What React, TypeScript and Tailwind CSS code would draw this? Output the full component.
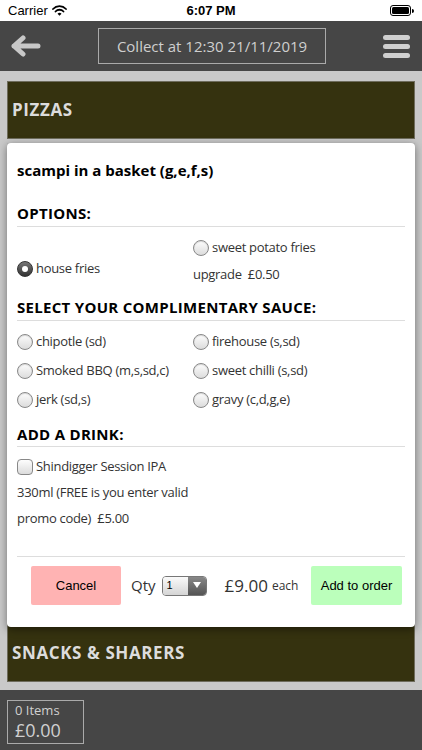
import React from "react";

const F = { fontFamily: '"Open Sans", "DejaVu Sans", sans-serif' };

function Radio({ checked = false }: { checked?: boolean }) {
  if (checked) {
    return (
      <span className="inline-flex h-[16px] w-[16px] shrink-0 items-center justify-center rounded-full border border-[#333] bg-gradient-to-b from-[#777] to-[#333]">
        <span className="h-[6px] w-[6px] rounded-full bg-white" />
      </span>
    );
  }
  return (
    <span className="inline-block h-[16px] w-[16px] shrink-0 rounded-full border border-[#888] bg-gradient-to-b from-[#fdfdfd] to-[#dcdcdc] shadow-[inset_0_1px_1px_rgba(0,0,0,0.15)]" />
  );
}

function Opt({ label, checked }: { label: string; checked?: boolean }) {
  return (
    <div className="flex h-[29px] items-center gap-[3px] text-[13px] tracking-[-0.3px] text-[#333]">
      <Radio checked={checked} />
      <span>{label}</span>
    </div>
  );
}

export default function App() {
  return (
    <div className="relative h-[750px] w-[422px] overflow-hidden bg-[#c9c9c9]" style={F}>
      {/* status bar */}
      <div
        className="flex h-[21px] items-center justify-between bg-white px-[8px] text-[13px] text-black"
        style={{ fontFamily: '"Liberation Sans", Arial, sans-serif' }}
      >
        <div className="flex w-[100px] items-center gap-[4px]">
          <span>Carrier</span>
          <svg width="15" height="11" viewBox="0 0 15 11">
            <path d="M1 4 A9 9 0 0 1 14 4" stroke="#000" strokeWidth="1.8" fill="none" strokeLinecap="round" />
            <path d="M3.5 6.5 A5.5 5.5 0 0 1 11.5 6.5" stroke="#000" strokeWidth="1.8" fill="none" strokeLinecap="round" />
            <path d="M5.5 8.8 L7.5 10.8 L9.5 8.8 A2.8 2.8 0 0 0 5.5 8.8 Z" fill="#000" />
          </svg>
        </div>
        <span className="font-bold">6:07 PM</span>
        <div className="flex w-[100px] justify-end">
          <div className="flex items-center">
            <div className="h-[11px] w-[21px] rounded-[3px] border border-black p-[1px]">
              <div className="h-full w-full rounded-[1.5px] bg-black" />
            </div>
            <div className="ml-[1px] h-[4px] w-[1.5px] rounded-r bg-black" />
          </div>
        </div>
      </div>

      {/* header */}
      <div className="flex h-[50px] items-center justify-between bg-[#464646] pl-[9px] pr-[12px]">
        <svg width="32" height="22" viewBox="0 0 32 22">
          <path d="M5 11 H29 M14 3 L5 11 L14 19" stroke="#c8c8c8" strokeWidth="5" fill="none" strokeLinecap="round" strokeLinejoin="round" />
        </svg>
        <div className="flex h-[36px] w-[228px] items-center justify-center border border-[#aaa] text-[15px] text-[#cfcfcf]">
          Collect at 12:30 21/11/2019
        </div>
        <div className="flex w-[27px] flex-col gap-[4px]">
          <div className="h-[5px] rounded-full bg-[#cfcfcf]" />
          <div className="h-[5px] rounded-full bg-[#cfcfcf]" />
          <div className="h-[5px] rounded-full bg-[#cfcfcf]" />
        </div>
      </div>

      {/* list */}
      <div className="flex flex-col px-[7px] pt-[10px] pb-[8px]">
        <div className="flex h-[58px] items-center border border-[#6e6c5c] bg-[#35320f] pl-[4px] text-[17px] font-bold tracking-[0.6px] text-[#dcdcdc]">
          PIZZAS
        </div>
        <div className="mt-[4px] h-[481px] bg-[#bdbdbd]" />
        <div className="flex h-[58px] items-center border border-[#6e6c5c] bg-[#35320f] pl-[4px] text-[17px] font-bold tracking-[0.6px] text-[#dcdcdc]">
          SNACKS &amp; SHARERS
        </div>
      </div>

      {/* footer */}
      <div className="h-[60px] bg-[#464646] px-[7px] pt-[10px]">
        <div className="flex h-[44px] w-[77px] flex-col justify-center gap-[1px] border border-[#aaa] pl-[7px] text-[#d0d0d0]">
          <div className="h-[15px] text-[13px] leading-[15px]">0 Items</div>
          <div className="h-[22px] text-[18px] leading-[22px]">£0.00</div>
        </div>
      </div>

      {/* modal */}
      <div className="absolute left-[7px] top-[143px] flex h-[484px] w-[408px] flex-col rounded-[4px] bg-white px-[10px] shadow-[0_2px_8px_rgba(0,0,0,0.45)]">
        <div className="mt-[17px] text-[15px] font-bold leading-[20px] text-black">scampi in a basket (g,e,f,s)</div>

        <div className="mt-[23px] text-[15px] font-bold leading-[20px] tracking-[0.3px] text-black">OPTIONS:</div>
        <div className="mt-[3px] border-t border-[#ddd]" />
        <div className="grid grid-cols-[176px_1fr]">
          <div className="pt-[27px]">
            <Opt label="house fries" checked />
          </div>
          <div className="pt-[6px]">
            <Opt label="sweet potato fries" />
            <div className="pt-[2px] text-[13px] leading-[20px] tracking-[-0.3px] text-[#333]">upgrade&nbsp; £0.50</div>
          </div>
        </div>

        <div className="mt-[13px] text-[15px] font-bold leading-[20px] tracking-[0.3px] text-black">SELECT YOUR COMPLIMENTARY SAUCE:</div>
        <div className="mt-[3px] border-t border-[#ddd]" />
        <div className="mt-[6px] grid grid-cols-[176px_1fr]">
          <Opt label="chipotle (sd)" />
          <Opt label="firehouse (s,sd)" />
          <Opt label="Smoked BBQ (m,s,sd,c)" />
          <Opt label="sweet chilli (s,sd)" />
          <Opt label="jerk (sd,s)" />
          <Opt label="gravy (c,d,g,e)" />
        </div>

        <div className="mt-[10px] text-[15px] font-bold leading-[20px] tracking-[0.3px] text-black">ADD A DRINK:</div>
        <div className="mt-[2px] border-t border-[#ddd]" />
        <div className="mt-[7px] flex h-[26px] items-center gap-[3px] text-[13px] tracking-[-0.3px] text-[#333]">
          <span className="inline-block h-[16px] w-[16px] shrink-0 rounded-[4px] border border-[#888] bg-gradient-to-b from-[#fdfdfd] to-[#dcdcdc]" />
          <span>Shindigger Session IPA</span>
        </div>
        <div className="flex h-[26px] items-center text-[13px] tracking-[-0.3px] text-[#333]">330ml (FREE is you enter valid</div>
        <div className="flex h-[26px] items-center text-[13px] tracking-[-0.3px] text-[#333]">promo code)&nbsp; £5.00</div>

        <div className="mt-[24px] border-t border-[#ddd]" />
        <div className="mt-[9px] flex h-[39px] items-center">
          <button
            className="ml-[14px] flex h-[39px] w-[90px] items-center justify-center rounded-[2px] bg-[#ffb3b3] text-[13px] text-black"
            style={{ fontFamily: '"Liberation Sans", Arial, sans-serif' }}
          >
            Cancel
          </button>
          <span className="ml-[10px] text-[15px] text-[#333]">Qty</span>
          <div className="ml-[6px] flex h-[20px] w-[45px] overflow-hidden rounded-[4px] border border-[#777]">
            <div
              className="flex flex-1 items-center bg-gradient-to-b from-[#fafafa] to-[#d5d5d5] pl-[4px] text-[11px] text-black"
              style={{ fontFamily: '"Liberation Sans", Arial, sans-serif' }}
            >
              1
            </div>
            <div className="flex w-[18px] items-center justify-center bg-gradient-to-b from-[#888] to-[#555]">
              <svg width="8" height="7" viewBox="0 0 8 7">
                <path d="M0 0 H8 L4 6 Z" fill="#fff" />
              </svg>
            </div>
          </div>
          <span className="ml-[18px] text-[17px] text-[#333]">£9.00</span>
          <span className="ml-[4px] text-[12px] text-[#333]">each</span>
          <button
            className="ml-auto mr-[3px] flex h-[39px] w-[91px] items-center justify-center rounded-[2px] bg-[#bbffbb] text-[13px] text-black"
            style={{ fontFamily: '"Liberation Sans", Arial, sans-serif' }}
          >
            Add to order
          </button>
        </div>
      </div>
    </div>
  );
}
